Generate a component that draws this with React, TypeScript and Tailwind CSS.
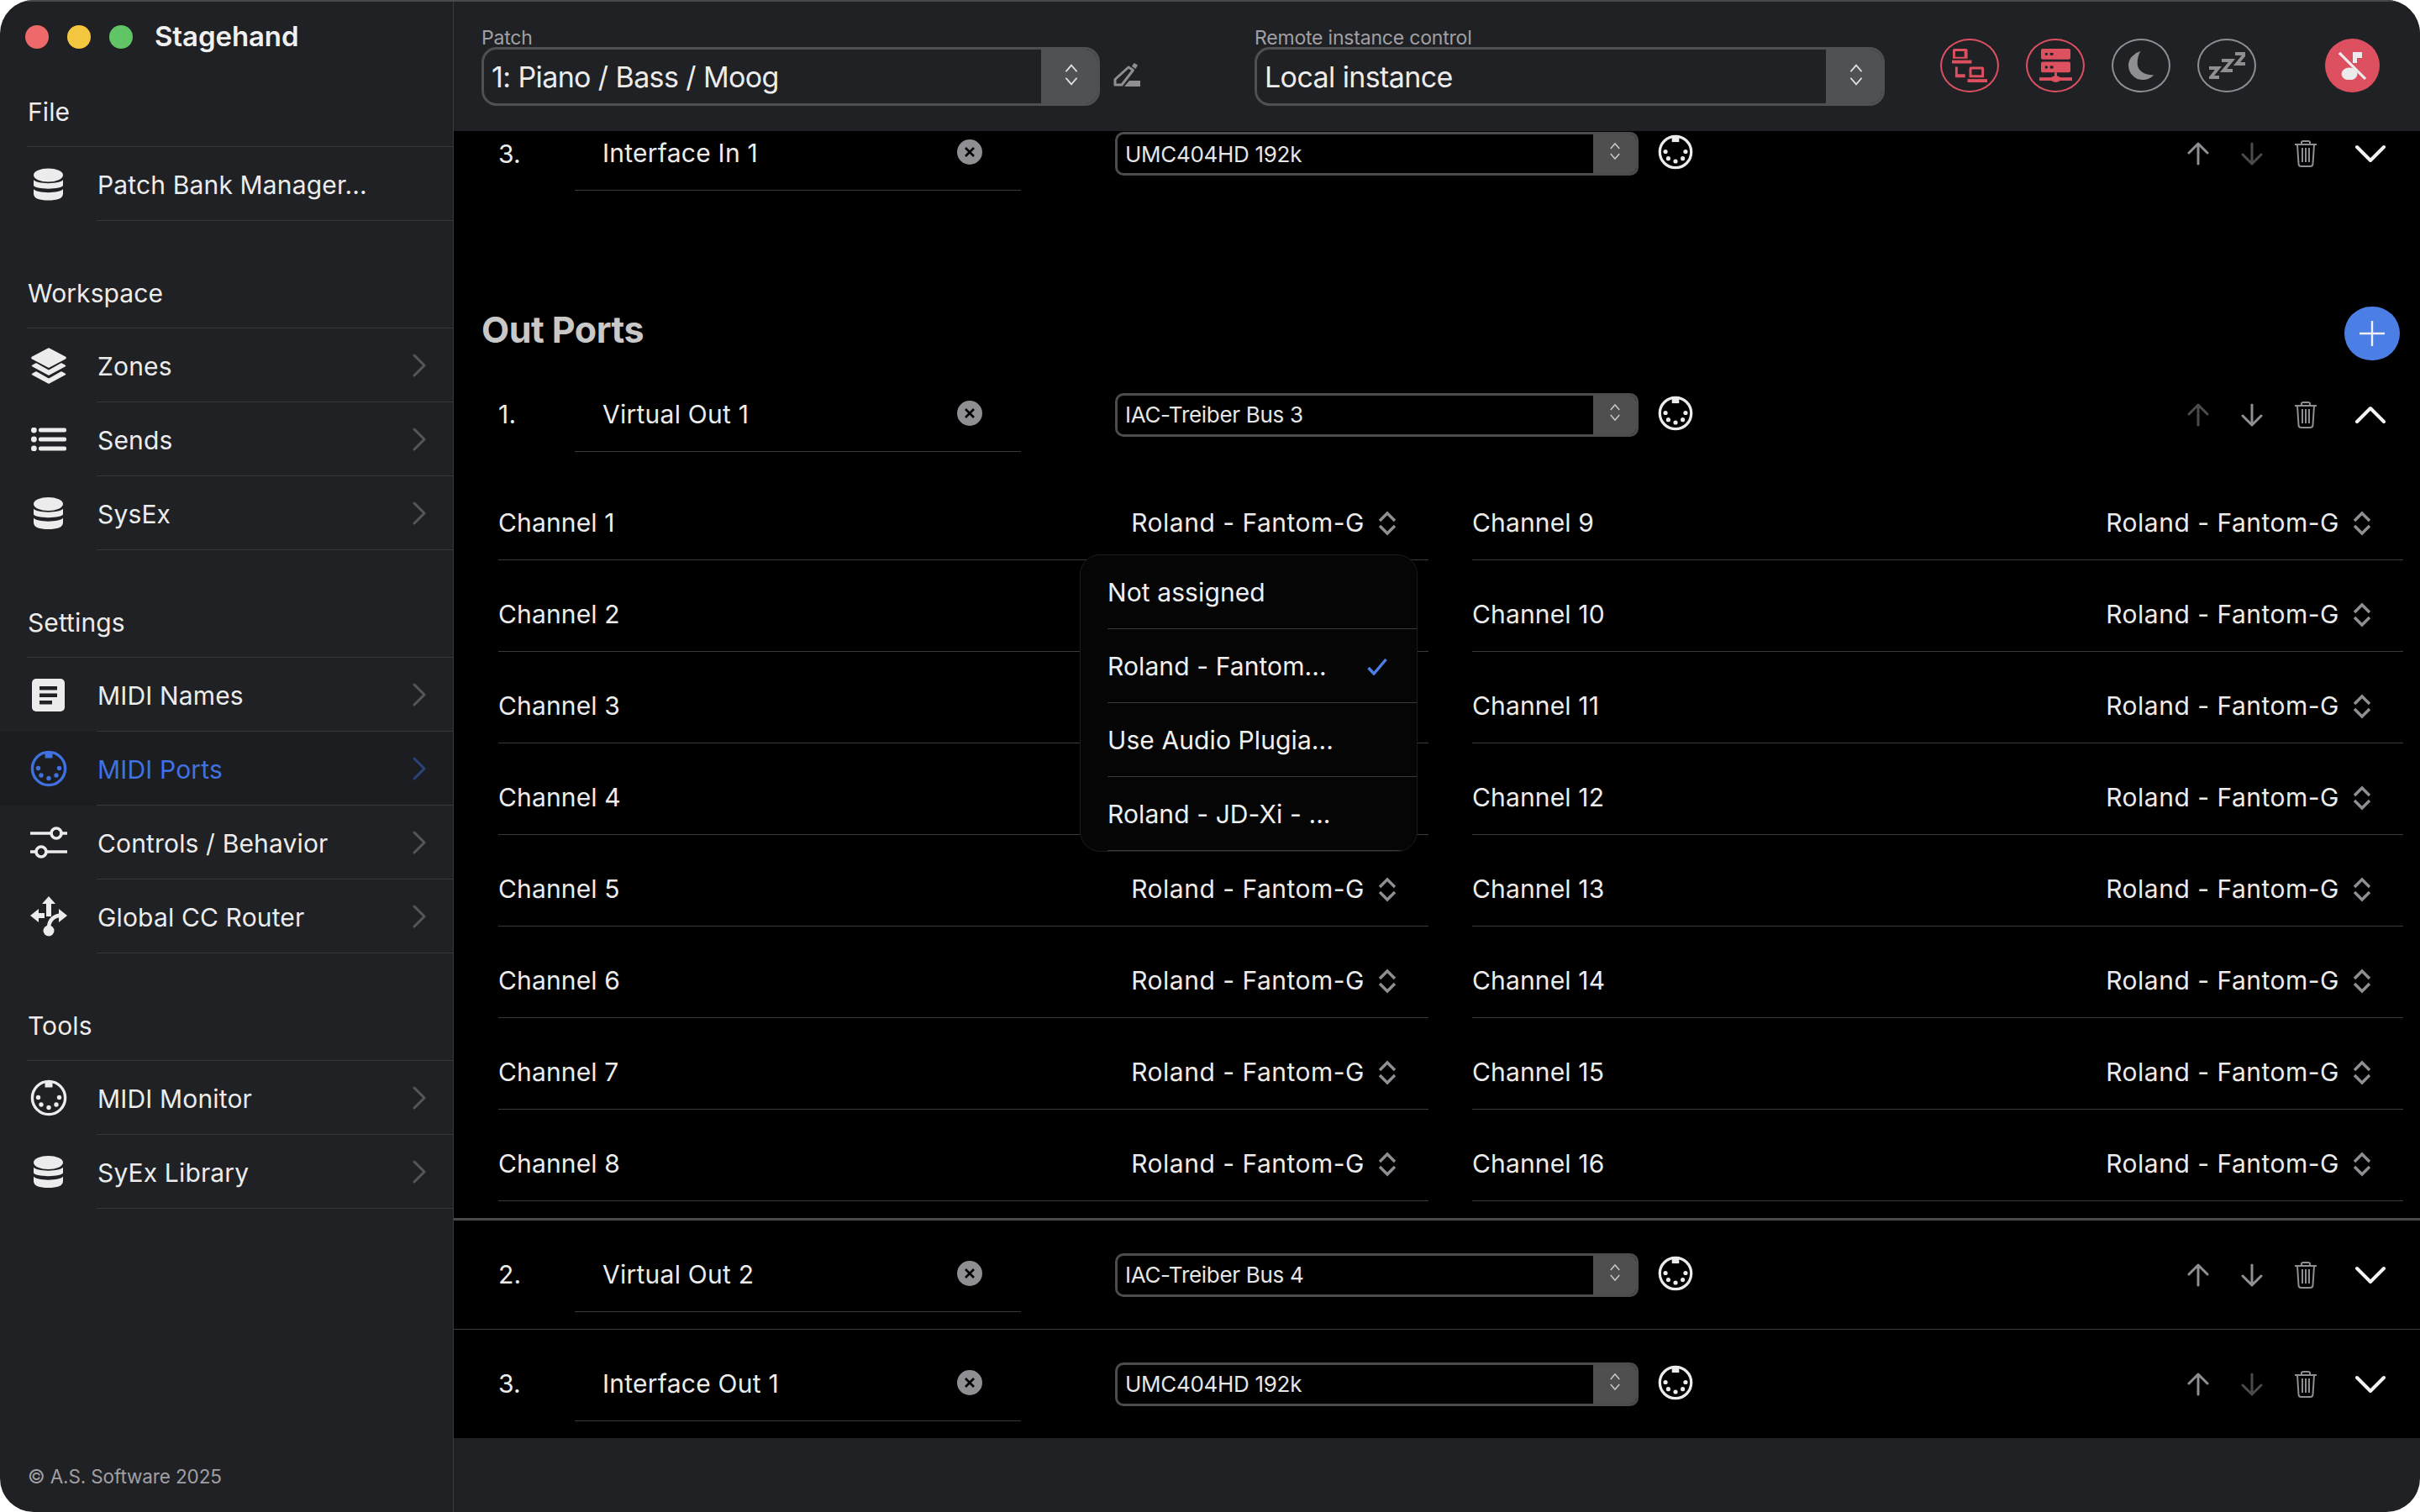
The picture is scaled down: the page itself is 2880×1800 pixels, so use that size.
import React from "react";

const RED = "#dc5060";

function Din({ className = "", color = "#ececec" }: { className?: string; color?: string }) {
  return (
    <svg viewBox="0 0 44 44" className={className} fill="none">
      <circle cx="22" cy="22" r="19.6" stroke={color} strokeWidth="3.4" />
      <rect x="17.5" y="3" width="9" height="6.5" fill={color} />
      <circle cx="9.5" cy="21.5" r="2.7" fill={color} />
      <circle cx="34.5" cy="21.5" r="2.7" fill={color} />
      <circle cx="13" cy="30" r="2.7" fill={color} />
      <circle cx="31" cy="30" r="2.7" fill={color} />
      <circle cx="22" cy="33.5" r="2.7" fill={color} />
    </svg>
  );
}

function Db({ className = "" }: { className?: string }) {
  return (
    <svg viewBox="0 0 35 38" className={className} fill="#ececec">
      <ellipse cx="17.5" cy="8" rx="17.5" ry="8" />
      <path d="M0 13.5C3 19 32 19 35 13.5V20C35 25.5 0 25.5 0 20Z" />
      <path d="M0 24.5C3 30 32 30 35 24.5V30C35 36 28 38 17.5 38C7 38 0 36 0 30Z" />
    </svg>
  );
}

function Layers({ className = "" }: { className?: string }) {
  return (
    <svg viewBox="0 0 42 43" className={className} fill="#ececec" stroke="#ececec" strokeLinejoin="round">
      <path d="M21 2L40 12L21 22L2 12Z" strokeWidth="3.5" />
      <path d="M6 19L1.5 21.5L21 32L40.5 21.5L36 19L21 27.5Z" strokeWidth="1.5" />
      <path d="M6 29L1.5 31.5L21 42L40.5 31.5L36 29L21 37.5Z" strokeWidth="1.5" />
    </svg>
  );
}

function ListIcon({ className = "" }: { className?: string }) {
  return (
    <svg viewBox="0 0 42 28" className={className} fill="#ececec">
      <circle cx="3.4" cy="3" r="3.4" />
      <circle cx="3.4" cy="14" r="3.4" />
      <circle cx="3.4" cy="25" r="3.4" />
      <rect x="9" y="0.5" width="33" height="5" rx="2" />
      <rect x="9" y="11.5" width="33" height="5" rx="2" />
      <rect x="9" y="22.5" width="33" height="5" rx="2" />
    </svg>
  );
}

function NoteIcon({ className = "" }: { className?: string }) {
  return (
    <svg viewBox="0 0 39 39" className={className}>
      <rect width="39" height="39" rx="5" fill="#ececec" />
      <rect x="9" y="9" width="21" height="4.5" fill="#202125" />
      <rect x="9" y="17.5" width="21" height="4.5" fill="#202125" />
      <rect x="9" y="26" width="15" height="4.5" fill="#202125" />
    </svg>
  );
}

function SlidersIcon({ className = "" }: { className?: string }) {
  return (
    <svg viewBox="0 0 44 40" className={className} fill="none" stroke="#ececec" strokeWidth="3.6">
      <path d="M0 9H25M37 9H44" />
      <circle cx="31" cy="9" r="6" />
      <path d="M0 31H7M19 31H44" />
      <circle cx="13" cy="31" r="6" />
    </svg>
  );
}

function RouterIcon({ className = "" }: { className?: string }) {
  return (
    <svg viewBox="0 0 44 48" className={className} fill="#ececec">
      <path d="M22 0L30 9H25V24H19V9H14Z" />
      <path d="M0 23L10 15V20H17V26H10V31Z" />
      <path d="M44 23L34 15V31Z" />
      <path d="M22 38C22 29 27 24 36 22.5" fill="none" stroke="#ececec" strokeWidth="4.5" />
      <circle cx="22" cy="41" r="6.5" />
    </svg>
  );
}

function SideChevron({ active }: { active?: boolean }) {
  return (
    <svg viewBox="0 0 16 28" className="w-[16px] h-[28px]" fill="none" stroke={active ? "#2a4378" : "#55565a"} strokeWidth="3" strokeLinecap="round" strokeLinejoin="round">
      <path d="M2 2L14 14L2 26" />
    </svg>
  );
}

function UpDown({ className = "", color = "#e0e0e0", sw = 2 }: { className?: string; color?: string; sw?: number }) {
  return (
    <svg viewBox="0 0 20 32" className={className} fill="none" stroke={color} strokeWidth={sw}>
      <path d="M3 12L10 4L17 12" />
      <path d="M3 20L10 28L17 20" />
    </svg>
  );
}

function Select({ text, big }: { text: string; big?: boolean }) {
  return big ? (
    <div className="h-[70px] flex rounded-[18px] border-[3px] border-[#4f5052] overflow-hidden w-full">
      <div className="flex-1 flex items-center pl-[9px] text-[34px] text-[#ececec] tracking-[-0.6px]">{text}</div>
      <div className="w-[67px] bg-[#505152] flex items-center justify-center pl-[4px]">
        <UpDown className="w-[20px] h-[30px] -mt-[5px]" sw={2} />
      </div>
    </div>
  ) : (
    <div className="h-[52px] w-[623px] flex rounded-[10px] border-[3px] border-[#4c4c4e] overflow-hidden">
      <div className="flex-1 flex items-center pl-[9px] text-[26px] tracking-[-0.3px] text-[#e6e6e6]">{text}</div>
      <div className="w-[51px] bg-[#4f4f50] flex items-center justify-center">
        <UpDown className="w-[16px] h-[24px] -mt-[6px]" color="#c8c8c8" />
      </div>
    </div>
  );
}

function Row({ n, name, port, upOff, downOff, open, last, tall }: { n: string; name: string; port: string; upOff?: boolean; downOff?: boolean; open?: boolean; last?: boolean; tall?: boolean }) {
  const off = "#4b4b4e";
  const on = "#8e8e93";
  return (
    <div className={`flex items-center pl-[53px] pr-[33px] ${tall ? "h-[129px]" : "h-[130px]"} ${last ? "" : "border-b border-[#3a3a3c]"}`}>
      <div className="w-[91px] text-[30px] text-[#ececec] tracking-[0.2px]">{n}</div>
      <div className="w-[531px] h-[109px] self-start pt-[20px] flex items-center justify-between border-b border-[#3a3a3c] pl-[33px] pr-[46px]">
        <span className="text-[30px] text-[#ececec] tracking-[0.25px]">{name}</span>
        <svg viewBox="0 0 30 30" className="w-[30px] h-[30px] -mt-[2px]">
          <circle cx="15" cy="15" r="15" fill="#8e8e93" />
          <path d="M10 10L20 20M20 10L10 20" stroke="#000" strokeWidth="2.6" />
        </svg>
      </div>
      <div className="ml-[112px]"><Select text={port} /></div>
      <Din className="w-[42px] h-[42px] ml-[23px] -mt-[4px]" />
      <div className="flex-1" />
      <svg viewBox="0 0 26 28" className="w-[26px] h-[28px]" fill="none" stroke={upOff ? off : on} strokeWidth="3" strokeLinecap="round" strokeLinejoin="round">
        <path d="M13 26V2M2 13L13 2L24 13" />
      </svg>
      <svg viewBox="0 0 26 28" className="w-[26px] h-[28px] ml-[38px]" fill="none" stroke={downOff ? off : on} strokeWidth="3" strokeLinecap="round" strokeLinejoin="round">
        <path d="M13 2V26M2 15L13 26L24 15" />
      </svg>
      <svg viewBox="0 0 28 32" className="w-[28px] h-[32px] ml-[37px]" fill="none" stroke={on} strokeWidth="2">
        <path d="M1 5H27M9 5V2.5C9 1.5 10 1 11 1H17C18 1 19 1.5 19 2.5V5M4 5L5.5 28C5.6 30 7 31 8.5 31H19.5C21 31 22.4 30 22.5 28L24 5" />
        <path d="M10 9V26M14 9V26M18 9V26" />
      </svg>
      <svg viewBox="0 0 36 22" className="w-[36px] h-[22px] ml-[45px] mr-[8px]" fill="none" stroke="#f4f4f4" strokeWidth="4" strokeLinecap="round" strokeLinejoin="round">
        {open ? <path d="M2 19L18 3L34 19" /> : <path d="M2 3L18 19L34 3" />}
      </svg>
    </div>
  );
}

function SideHead({ t, mt }: { t: string; mt: string }) {
  return (
    <div className={`${mt} h-[62px] ml-[32px] border-b border-[#36373a] text-[30px] text-[#ececec] tracking-[0.1px] leading-[40px] pl-px`}>{t}</div>
  );
}

function SideRow({ icon, label, active, noChevron }: { icon: React.ReactNode; label: string; active?: boolean; noChevron?: boolean }) {
  return (
    <div className={`h-[88px] flex ${active ? "bg-[#1c1d20]" : ""}`}>
      <div className="w-[115px] shrink-0 flex items-center justify-center">{icon}</div>
      <div className="flex-1 flex items-center border-b border-[#36373a] pr-[32px] justify-between">
        <span className={`text-[30px] tracking-[0.15px] pl-px pt-[3px] ${active ? "text-[#3f72e0]" : "text-[#ececec]"}`}>{label}</span>
        {!noChevron && <SideChevron active={active} />}
      </div>
    </div>
  );
}

function Channel({ name, hidden }: { name: string; hidden?: boolean }) {
  return (
    <div className="h-[109px] flex items-center justify-between pt-[21px] border-b border-[#3a3a3c]">
      <span className="text-[30px] text-[#ececec] tracking-[0.15px]">{name}</span>
      {!hidden && (
        <div className="flex items-center mr-[38px]">
          <span className="text-[30px] text-[#ececec] tracking-[0.5px]">Roland - Fantom-G</span>
          <svg viewBox="0 0 22 30" className="w-[22px] h-[30px] ml-[16px]" fill="none" stroke="#8e8e93" strokeWidth="3.4">
            <path d="M2 12L11 3L20 12" />
            <path d="M2 18L11 27L20 18" />
          </svg>
        </div>
      )}
    </div>
  );
}

function RoundBtn({ color, children }: { color: string; children: React.ReactNode }) {
  return (
    <div className="w-[70px] h-[64px] rounded-[50%] border-[2.5px] flex items-center justify-center" style={{ borderColor: color }}>
      {children}
    </div>
  );
}

export default function App() {
  const menu = ["Not assigned", "Roland - Fantom...", "Use Audio Plugia...", "Roland - JD-Xi - ..."];
  return (
    <div className="w-[2880px] h-[1800px] bg-white [font-family:Inter,sans-serif] overflow-hidden">
      <div className="w-full h-full rounded-[40px] overflow-hidden flex bg-[#202125] relative">
        <div className="absolute inset-x-0 top-0 h-[2px] bg-[#48494c] z-20" />
        {/* Sidebar */}
        <aside className="w-[540px] shrink-0 h-full border-r border-[#3a3b3e] flex flex-col">
          <div className="flex items-center h-[88px] pl-[30px]">
            <span className="w-[28px] h-[28px] rounded-full bg-[#ee6a6a]" />
            <span className="w-[28px] h-[28px] rounded-full bg-[#f5c63f] ml-[22px]" />
            <span className="w-[28px] h-[28px] rounded-full bg-[#61c465] ml-[22px]" />
            <span className="ml-[26px] text-[33px] font-semibold text-[#f0f0f0] tracking-[-0.1px]">Stagehand</span>
          </div>
          <SideHead t="File" mt="mt-[25px]" />
          <SideRow icon={<Db className="w-[35px] h-[39px]" />} label="Patch Bank Manager..." noChevron />
          <SideHead t="Workspace" mt="mt-[66px]" />
          <SideRow icon={<Layers className="w-[42px] h-[43px]" />} label="Zones" />
          <SideRow icon={<ListIcon className="w-[42px] h-[28px]" />} label="Sends" />
          <SideRow icon={<Db className="w-[35px] h-[38px]" />} label="SysEx" />
          <SideHead t="Settings" mt="mt-[66px]" />
          <SideRow icon={<NoteIcon className="w-[39px] h-[39px]" />} label="MIDI Names" />
          <SideRow active icon={<Din className="w-[44px] h-[44px]" color="#3f72e0" />} label="MIDI Ports" />
          <SideRow icon={<SlidersIcon className="w-[44px] h-[40px]" />} label="Controls / Behavior" />
          <SideRow icon={<RouterIcon className="w-[44px] h-[48px]" />} label="Global CC Router" />
          <SideHead t="Tools" mt="mt-[66px]" />
          <SideRow icon={<Din className="w-[44px] h-[44px]" />} label="MIDI Monitor" />
          <SideRow icon={<Db className="w-[35px] h-[38px]" />} label="SyEx Library" />
          <div className="mt-auto mb-[25px] ml-[33px] text-[22.5px] text-[#a0a0a4] tracking-[-0.12px]">© A.S. Software 2025</div>
        </aside>

        {/* Main */}
        <main className="flex-1 flex flex-col h-full min-w-0">
          <header className="h-[156px] shrink-0 bg-[#202125] flex pl-[33px]">
            <div className="w-[736px] pt-[34px]">
              <div className="text-[23px] leading-[22px] text-[#a0a0a4] tracking-[-0.2px]">Patch</div>
              <Select big text="1: Piano / Bass / Moog" />
            </div>
            <svg viewBox="0 0 32 28" className="w-[32px] h-[28px] ml-[16px] mt-[75px]" fill="none">
              <path d="M2 26V19.5L18 5L23.5 8.5L10 26Z" stroke="#8e8e93" strokeWidth="3" strokeLinejoin="round" />
              <path d="M22 4L24.5 0L29 2.5L26.5 7Z" fill="#8e8e93" />
              <path d="M13 28L19 21H32V28Z" fill="#8e8e93" />
            </svg>
            <div className="w-[750px] pt-[34px] ml-[136px]">
              <div className="text-[23px] leading-[22px] text-[#a0a0a4] tracking-[-0.2px]">Remote instance control</div>
              <Select big text="Local instance" />
            </div>
            <div className="flex pt-[46px] ml-[66px] gap-[32px]">
              <RoundBtn color={RED}>
                <svg viewBox="0 0 44 44" className="w-[43px] h-[43px]" fill={RED}>
                  <path fillRule="evenodd" d="M3 1H17a2 2 0 012 2V13H1V3a2 2 0 012-2ZM4 4V11H15V4Z" />
                  <rect x="0" y="15" width="24" height="4" />
                  <path fillRule="evenodd" d="M23 23H37a2 2 0 012 2V36H21V25a2 2 0 012-2ZM24 26V33H36V26Z" />
                  <rect x="19" y="38" width="24" height="4" />
                  <path d="M4 23H7V32H16V36H4Z" />
                </svg>
              </RoundBtn>
              <RoundBtn color={RED}>
                <svg viewBox="0 0 40 41" className="w-[39px] h-[40px]" fill={RED}>
                  <path fillRule="evenodd" d="M4 0H36a2 2 0 012 2V11a2 2 0 01-2 2H4a2 2 0 01-2-2V2a2 2 0 012-2ZM7 5V8H10V5ZM13 5V8H17V5Z" />
                  <path fillRule="evenodd" d="M4 16H36a2 2 0 012 2V27a2 2 0 01-2 2H4a2 2 0 01-2-2V18a2 2 0 012-2ZM7 21V24H10V21ZM13 21V24H17V21Z" />
                  <rect x="18.5" y="29" width="3" height="8" />
                  <rect x="0" y="35" width="40" height="4" />
                  <ellipse cx="20" cy="37" rx="6" ry="4" />
                </svg>
              </RoundBtn>
              <RoundBtn color="#8e8e93">
                <svg viewBox="0 0 32 36" className="w-[31px] h-[35px]" fill="#8e8e93">
                  <path d="M15 0C5 3 0 10 0 17C0 28 9 35 17 35C23 35 28 33 31 29C22 30 11 25 11 15C11 8 13 3 15 0Z" />
                </svg>
              </RoundBtn>
              <RoundBtn color="#8e8e93">
                <svg viewBox="0 0 43 32" className="w-[43px] h-[32px]" fill="none" stroke="#8e8e93" strokeWidth="3.8">
                  <path d="M0 19H11L2 30H12" />
                  <path d="M15 10H27L17 22H28" />
                  <path d="M31 2H43L33 14H43" />
                </svg>
              </RoundBtn>
              <div className="w-[65px] h-[64px] rounded-[50%] ml-[51px] flex items-center justify-center -translate-x-[1px]" style={{ backgroundColor: RED }}>
                <svg viewBox="0 0 33 34" className="w-[33px] h-[34px]">
                  <ellipse cx="13" cy="27" rx="9.5" ry="7.5" fill="#ececec" />
                  <path d="M17 1H28V8H22V14H17Z" fill="#ececec" />
                  <path d="M1 2L32 33" stroke="#ececec" strokeWidth="3.2" />
                </svg>
              </div>
            </div>
          </header>

          <section className="h-[1556px] shrink-0 overflow-hidden bg-black">
            <div className="-mt-[38px]">
              <Row n="3." name="Interface In 1" port="UMC404HD 192k" downOff last />
              <div className="h-[181px] pt-[117px] pl-[33px] pr-[24px] flex justify-between items-start">
                <h2 className="text-[43px] leading-[44px] mt-[5px] font-bold text-[#c8c8c8] tracking-[-0.5px]">Out Ports</h2>
                <div className="w-[66px] h-[64px] rounded-full bg-[#4c7fe6] flex items-center justify-center">
                  <svg viewBox="0 0 30 30" className="w-[30px] h-[30px]" stroke="#f0f0f0" strokeWidth="2.4"><path d="M15 0V30M0 15H30" /></svg>
                </div>
              </div>
              <Row n="1." name="Virtual Out 1" port="IAC-Treiber Bus 3" upOff open last tall />
              <div className="pl-[53px] pr-[20px] pb-[20px] border-b-[3px] border-[#4a4a4c] grid grid-cols-[1107px_1108px] gap-x-[52px]">
                <div>
                  {[1, 2, 3, 4, 5, 6, 7, 8].map((c) => <Channel key={c} name={`Channel ${c}`} hidden={c >= 2 && c <= 4} />)}
                </div>
                <div>
                  {[9, 10, 11, 12, 13, 14, 15, 16].map((c) => <Channel key={c} name={`Channel ${c}`} />)}
                </div>
              </div>
              <Row n="2." name="Virtual Out 2" port="IAC-Treiber Bus 4" />
              <Row n="3." name="Interface Out 1" port="UMC404HD 192k" downOff last tall />
            </div>
          </section>
        </main>

        {/* Popup menu */}
        <div className="absolute left-[1285px] top-[660px] w-[402px] h-[354px] rounded-[24px] bg-[#050506] border border-[#1b1b1e] overflow-hidden z-20">
          {menu.map((m, i) => (
            <div key={m} className="h-[88px] ml-[32px] pt-[2px] flex items-center border-b border-[#3a3a3c] text-[30px] text-[#f0f0f0] tracking-[0.1px] relative">
              {m}
              {i === 1 && (
                <svg viewBox="0 0 24 20" className="w-[24px] h-[20px] absolute left-[309px] top-[35px]" fill="none" stroke="#4c7fe6" strokeWidth="3.4">
                  <path d="M1.5 11L8 18L22.5 1" />
                </svg>
              )}
            </div>
          ))}
        </div>
      </div>
    </div>
  );
}
